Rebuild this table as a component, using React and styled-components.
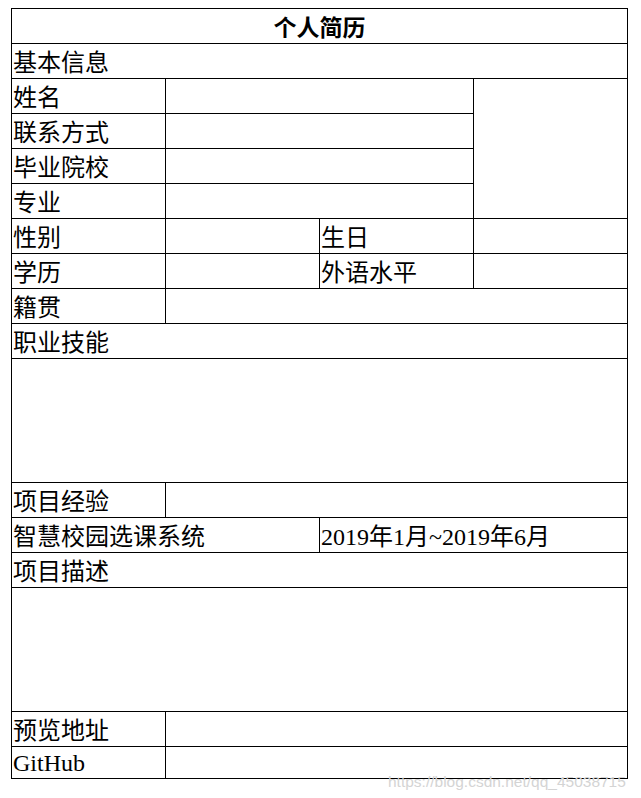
import React from "react";
import styled, { createGlobalStyle } from "styled-components";

const Global = createGlobalStyle`
  html, body { margin: 0; padding: 0; background: #fff; }
  body { font-family: "Liberation Serif", "Noto Sans CJK SC", serif; color: #000; }
`;

const Page = styled.div`
  position: relative;
  padding: 8px 0 0 11px;
  width: 641px;
  height: 798px;
  box-sizing: border-box;
`;

const Sheet = styled.div`
  display: grid;
  grid-template-columns: repeat(4, 153px);
  grid-template-rows: repeat(10, 34px) 123px 34px 34px 34px 123px 34px 31px;
  gap: 1px;
  padding: 1px;
  width: max-content;
  background: #000;
`;

const Cell = styled.div`
  background: #fff;
  grid-column: span ${(p) => p.$span || 1};
  grid-row: span ${(p) => p.$rows || 1};
  display: flex;
  align-items: center;
  justify-content: ${(p) => (p.$center ? "center" : "flex-start")};
  padding: ${(p) => (p.$latin ? "0 1px" : "4px 1px 0")};
  font-size: 24px;
  line-height: 1;
  white-space: nowrap;
  font-weight: ${(p) => (p.$bold ? 700 : 400)};
`;

const Title = styled(Cell)`
  font-family: "Noto Sans CJK SC", sans-serif;
  font-size: 23px;
  padding-top: 1px;
`;

const Watermark = styled.span`
  position: absolute;
  left: 388px;
  top: 773px;
  font-family: "Liberation Sans", Arial, sans-serif;
  font-size: 15.5px;
  color: #d4d4d4;
  pointer-events: none;
`;

export default function App() {
  return (
    <>
      <Global />
      <Page>
        <Sheet>
          <Title $span={4} $center $bold>个人简历</Title>
          <Cell $span={4}>基本信息</Cell>

          <Cell>姓名</Cell>
          <Cell $span={2} />
          <Cell $rows={4} />
          <Cell>联系方式</Cell>
          <Cell $span={2} />
          <Cell>毕业院校</Cell>
          <Cell $span={2} />
          <Cell>专业</Cell>
          <Cell $span={2} />

          <Cell>性别</Cell>
          <Cell />
          <Cell>生日</Cell>
          <Cell />

          <Cell>学历</Cell>
          <Cell />
          <Cell>外语水平</Cell>
          <Cell />

          <Cell>籍贯</Cell>
          <Cell $span={3} />

          <Cell $span={4}>职业技能</Cell>
          <Cell $span={4} />

          <Cell>项目经验</Cell>
          <Cell $span={3} />

          <Cell $span={2}>智慧校园选课系统</Cell>
          <Cell $span={2}>2019年1月~2019年6月</Cell>

          <Cell $span={4}>项目描述</Cell>
          <Cell $span={4} />

          <Cell>预览地址</Cell>
          <Cell $span={3} />

          <Cell $latin>GitHub</Cell>
          <Cell $span={3} $latin />
        </Sheet>
        <Watermark>https://blog.csdn.net/qq_45038715</Watermark>
      </Page>
    </>
  );
}
